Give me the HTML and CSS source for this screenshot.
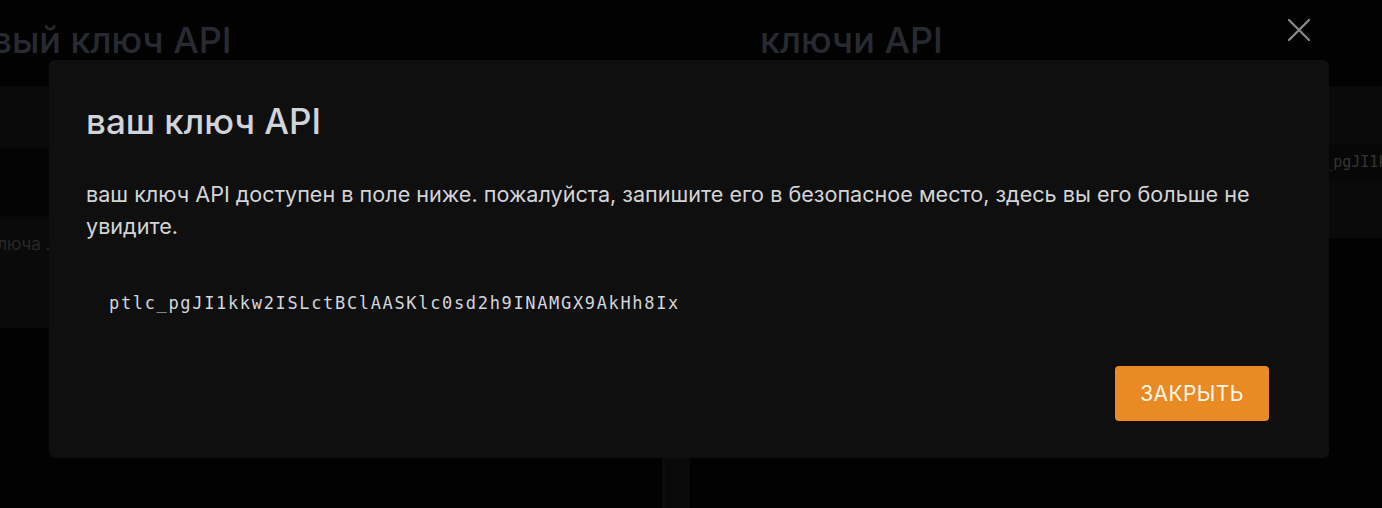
FILE: index.html
```html
<!DOCTYPE html>
<html lang="ru">
<head>
<meta charset="utf-8">
<title>ваш ключ API</title>
<link rel="stylesheet" href="styles.css">
</head>
<body>
<div class="page">
  <section class="col col-left">
    <h2 class="col-title">новый ключ API</h2>
    <div class="panel panel-head"></div>
    <div class="panel panel-dark"></div>
    <div class="panel panel-form">
      <span class="placeholder">название ключа ...</span>
    </div>
  </section>
  <div class="gutter"></div>
  <section class="col col-right">
    <h2 class="col-title">ключи API</h2>
    <div class="panel panel-keys">
      <div class="key-row"><span class="key-mono">ptlc_pgJI1kkw2ISLctBClAASKlc0sd2h9INAMGX9AkHh8Ix</span></div>
    </div>
  </section>
</div>

<div class="overlay">
  <button class="close-x" aria-label="закрыть">
    <svg width="22" height="22" viewBox="0 0 22 22"><path d="M1 1 L21 21 M21 1 L1 21" stroke="#8a8a8a" stroke-width="2.2" stroke-linecap="square" fill="none"/></svg>
  </button>
  <div class="modal">
    <h1 class="modal-title">ваш ключ API</h1>
    <p class="modal-text">ваш ключ API доступен в поле ниже. пожалуйста, запишите его в безопасное место, здесь вы его больше не увидите.</p>
    <div class="key-box">ptlc_pgJI1kkw2ISLctBClAASKlc0sd2h9INAMGX9AkHh8Ix</div>
    <div class="modal-footer">
      <button class="btn-close">ЗАКРЫТЬ</button>
    </div>
  </div>
</div>
</body>
</html>
```

FILE: styles.css
```css
html, body {
  margin: 0;
  padding: 0;
  background: #030303;
  overflow: hidden;
  font-family: Inter, "Noto Sans", sans-serif;
}

.page {
  display: grid;
  grid-template-columns: 770px 28px 770px;
  margin-left: -108px;
  height: 508px;
}

.col-title {
  margin: 0;
  height: 86px;
  box-sizing: border-box;
  padding: 18px 0 0 70px;
  font-size: 36px;
  font-weight: 500;
  color: #2a2d33;
  line-height: 44px;
  white-space: nowrap;
}

.col-left .col-title {
  padding-left: 56px;
}

.gutter {
  margin-top: 86px;
  background: #0a0a0a;
  border-left: 3px solid #0d0d0d;
}

.panel-head {
  height: 61px;
  background: #0b0b0b;
  border-bottom: 2px solid #070707;
}

.panel-dark {
  height: 66px;
  background: #040404;
  border-bottom: 2px solid #070707;
}

.panel-form {
  height: 111px;
  background: #0b0b0b;
  box-sizing: border-box;
  padding: 16px 0 0 14px;
}

.placeholder {
  font-size: 17px;
  color: #2b2b2b;
  line-height: 22px;
  white-space: nowrap;
}

.panel-keys {
  height: 152px;
  background: #0b0b0b;
  padding-top: 57px;
  box-sizing: border-box;
}

.key-row {
  height: 37px;
  background: #080808;
  display: flex;
  align-items: center;
  padding-left: 598px;
  white-space: nowrap;
}

.key-mono {
  font-family: "DejaVu Sans Mono", monospace;
  font-size: 15px;
  color: #383838;
}

.overlay {
  position: fixed;
  inset: 0;
  background: rgba(0, 0, 0, 0.05);
}

.close-x {
  position: absolute;
  top: 19px;
  left: 1288px;
  width: 22px;
  height: 22px;
  padding: 0;
  border: 0;
  background: none;
  display: block;
}

.close-x svg {
  display: block;
}

.modal {
  position: absolute;
  top: 60px;
  left: 49px;
  width: 1280px;
  height: 398px;
  box-sizing: border-box;
  background: #0f0f0f;
  border-radius: 6px;
  padding: 37px;
  display: flex;
  flex-direction: column;
}

.modal-title {
  margin: 0;
  font-size: 35px;
  font-weight: 500;
  line-height: 48px;
  color: #d1d4da;
}

.modal-text {
  margin: 33px 0 0 0;
  font-size: 21.6px;
  line-height: 32px;
  color: #d4d4d6;
}

.key-box {
  margin-top: 49px;
  padding-left: 23px;
  font-family: "DejaVu Sans Mono", monospace;
  font-size: 17px;
  font-weight: 500;
  letter-spacing: 1.66px;
  line-height: 24px;
  color: #d3d6dc;
}

.modal-footer {
  margin-top: auto;
  display: flex;
  justify-content: flex-end;
  padding-right: 23px;
}

.btn-close {
  width: 154px;
  height: 55px;
  border: 0;
  border-radius: 4px;
  background: #e98a24;
  color: #fff6ea;
  font-family: Inter, "Noto Sans", sans-serif;
  font-size: 21px;
  font-weight: 400;
  letter-spacing: 0.4px;
}
```
